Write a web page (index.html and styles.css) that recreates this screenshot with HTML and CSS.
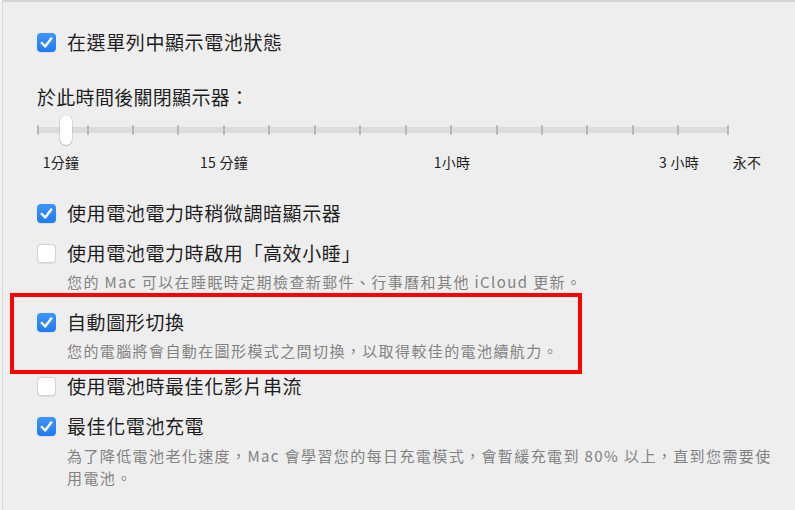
FILE: index.html
```html
<!DOCTYPE html>
<html lang="zh-Hant">
<head>
<meta charset="utf-8">
<link rel="stylesheet" href="styles.css">
</head>
<body>
<div class="panel">
  <div class="row r1">
    <span class="box on"><svg viewBox="0 0 20 20"><path d="M5 10.5 L8.6 14.2 L15 5.8"/></svg></span>
    <span class="label">在選單列中顯示電池狀態</span>
  </div>

  <div class="heading">於此時間後關閉顯示器：</div>

  <div class="slider">
    <div class="ticks">
      <span class="tick"></span>
      <div class="inner">
        <span class="tick"></span><span class="tick"></span><span class="tick"></span><span class="tick"></span>
        <span class="tick"></span><span class="tick"></span><span class="tick"></span><span class="tick"></span>
        <span class="tick"></span><span class="tick"></span><span class="tick"></span><span class="tick"></span>
        <span class="tick"></span><span class="tick"></span>
      </div>
      <span class="tick"></span>
    </div>
    <span class="knob"></span>
  </div>

  <div class="scale">
    <span class="mark m1">1分鐘</span>
    <span class="mark m2">15 分鐘</span>
    <span class="mark m3">1小時</span>
    <span class="mark m4">3 小時</span>
    <span class="mark m5">永不</span>
  </div>

  <div class="row r2">
    <span class="box on"><svg viewBox="0 0 20 20"><path d="M5 10.5 L8.6 14.2 L15 5.8"/></svg></span>
    <span class="label">使用電池電力時稍微調暗顯示器</span>
  </div>

  <div class="row r3">
    <span class="box"></span>
    <span class="label">使用電池電力時啟用「高效小睡」</span>
  </div>
  <div class="desc d3">您的 Mac 可以在睡眠時定期檢查新郵件、行事曆和其他 iCloud 更新。</div>

  <div class="highlight">
    <div class="row r4">
      <span class="box on"><svg viewBox="0 0 20 20"><path d="M5 10.5 L8.6 14.2 L15 5.8"/></svg></span>
      <span class="label">自動圖形切換</span>
    </div>
    <div class="desc d4">您的電腦將會自動在圖形模式之間切換，以取得較佳的電池續航力。</div>
  </div>

  <div class="row r5">
    <span class="box"></span>
    <span class="label">使用電池時最佳化影片串流</span>
  </div>

  <div class="row r6">
    <span class="box on"><svg viewBox="0 0 20 20"><path d="M5 10.5 L8.6 14.2 L15 5.8"/></svg></span>
    <span class="label">最佳化電池充電</span>
  </div>
  <div class="desc d6">為了降低電池老化速度，Mac 會學習您的每日充電模式，會暫緩充電到 80% 以上，直到您需要使<br>用電池。</div>
</div>
</body>
</html>
```

FILE: styles.css
```css
html, body {
  margin: 0;
  padding: 0;
  background: #f2f2f2;
}

body {
  font-family: "Noto Sans CJK TC", "Noto Sans", sans-serif;
  color: #1e1e1e;
  width: 795px;
  height: 510px;
  overflow: hidden;
}

.panel {
  margin-left: 2px;
  height: 510px;
  box-sizing: border-box;
  border-top: 2px solid #d4d4d4;
  border-left: 1px solid #d8d8d8;
  background: #eeeeee;
  padding: 26px 0 0 34px;
}

.row {
  display: flex;
  align-items: center;
  height: 28px;
}

.box {
  width: 19px;
  height: 19px;
  border-radius: 4px;
  box-sizing: border-box;
  background: #ffffff;
  border: 1px solid #d3d3d3;
  box-shadow: 0 0.5px 1px rgba(0, 0, 0, 0.08);
  flex: none;
  display: flex;
  align-items: center;
  justify-content: center;
}

.box.on {
  background: linear-gradient(#3d96fc, #1d7bf3);
  border: none;
}

.box svg {
  width: 19px;
  height: 19px;
}

.box svg path {
  fill: none;
  stroke: #ffffff;
  stroke-width: 2.6;
  stroke-linecap: round;
  stroke-linejoin: round;
}

.label {
  margin-left: 11px;
  font-size: 19px;
  letter-spacing: 0.6px;
  line-height: 28px;
  white-space: nowrap;
}

.heading {
  margin-top: 29px;
  height: 24px;
  line-height: 24px;
  font-size: 19px;
  letter-spacing: 0.3px;
  white-space: nowrap;
}

.slider {
  position: relative;
  margin-top: 6px;
  width: 692px;
  height: 30px;
}

.ticks {
  height: 30px;
  display: flex;
  align-items: center;
  justify-content: space-between;
  background: linear-gradient(#dcdcdc, #dcdcdc) center / 100% 6px no-repeat;
}

.inner {
  width: 593px;
  display: flex;
  align-items: center;
  justify-content: space-between;
}

.tick {
  width: 2px;
  height: 10px;
  background: #b6b6b6;
  border-radius: 1px;
}

.knob {
  position: absolute;
  left: 23px;
  top: 0;
  width: 12px;
  height: 30px;
  border-radius: 6px;
  background: #ffffff;
  box-shadow: 0 0.5px 1.5px rgba(0, 0, 0, 0.3), 0 0 0 0.5px rgba(0, 0, 0, 0.08);
}

.scale {
  margin-top: 7px;
  height: 20px;
  display: flex;
  align-items: center;
  font-size: 14px;
  letter-spacing: 0.3px;
}

.mark {
  width: 60px;
  text-align: center;
  white-space: nowrap;
  flex: none;
}

.m1 { margin-left: -6px; }
.m2 { margin-left: 103px; }
.m3 { margin-left: 168px; }
.m4 { margin-left: 167px; }
.m5 { margin-left: 8px; }

.r2 { margin-top: 27px; }
.r3 { margin-top: 12px; }

.desc {
  margin-left: 30px;
  font-size: 15px;
  line-height: 22px;
  letter-spacing: 1.4px;
  color: #828282;
  white-space: nowrap;
}

.d3 { margin-top: 4px; }

.highlight {
  margin-top: 0;
  margin-left: -27px;
  width: 541px;
  border: 4px solid #ff0000;
  padding: 11px 0 8px 23px;
}

.d4 { margin-top: 4px; }

.r5 { margin-top: -2px; }
.r6 { margin-top: 12px; }
.d6 { margin-top: 5px; }
```
